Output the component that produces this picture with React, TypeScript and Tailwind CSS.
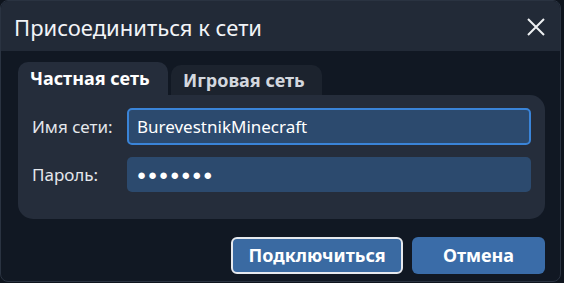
const font = { fontFamily: '"Noto Sans", "Open Sans", sans-serif' };

function Field({ label, focused, children }: { label: string; focused?: boolean; children: React.ReactNode }) {
  return (
    <div className="flex items-center">
      <span className="w-[95px] shrink-0 text-[17px] text-[#e4e7ec]">{label}</span>
      <div
        className={
          focused
            ? "flex h-[37px] flex-1 items-center rounded-[5px] border-2 border-[#3a84d8] bg-[#2c4a6e] px-[8px] text-[17px] text-white"
            : "flex h-[35px] flex-1 items-center rounded-[5px] bg-[#2c4a6e] px-[10px] text-[17px] text-white"
        }
      >
        {children}
      </div>
    </div>
  );
}

export default function App() {
  return (
    <div className="h-[283px] w-[564px] bg-[#0e141d]" style={font}>
      <div className="flex h-[282px] w-[561px] flex-col overflow-hidden rounded-[8px] border border-[#2a3341] bg-[#111823]">
        <div className="flex h-[50px] shrink-0 items-center justify-between bg-[#222a37] pl-[13px] pr-[14px] pt-[2px]">
          <span className="text-[22px] text-[#f2f4f7]">Присоединиться к сети</span>
          <svg width="20" height="18" viewBox="0 0 20 18" className="text-[#eef0f3]">
            <path d="M2 1 L18 17 M18 1 L2 17" stroke="currentColor" strokeWidth="2" fill="none" />
          </svg>
        </div>

        <div className="pl-[17px] pr-[15px] pt-[11px]">
          <div className="flex items-end gap-[3px]">
            <div className="flex h-[33px] w-[150px] items-center rounded-t-[10px] bg-[#252d3b] pl-[12px] text-[18px] font-bold text-white">
              Частная сеть
            </div>
            <div className="flex h-[30px] w-[151px] items-center rounded-t-[10px] bg-[#1c232e] pl-[12px] text-[18px] font-bold text-[#d3d7de]">
              Игровая сеть
            </div>
          </div>

          <div className="flex flex-col gap-[12px] rounded-b-[15px] rounded-tr-[15px] bg-[#252d3b] pb-[27px] pl-[14px] pr-[14px] pt-[13px]">
            <Field label="Имя сети:" focused>
              BurevestnikMinecraft
            </Field>
            <Field label="Пароль:">
              <span className="text-[15px] tracking-[2px]">●●●●●●●</span>
            </Field>
          </div>

          <div className="mt-[18px] flex justify-end gap-[9px]">
            <button className="h-[37px] w-[172px] rounded-[6px] border-2 border-[#e6e9ee] bg-[#3a6aa2] text-[18px] font-bold text-white">
              Подключиться
            </button>
            <button className="h-[37px] w-[133px] rounded-[6px] bg-[#3a6ca8] text-[18px] font-bold text-white">
              Отмена
            </button>
          </div>
        </div>
      </div>
    </div>
  );
}
